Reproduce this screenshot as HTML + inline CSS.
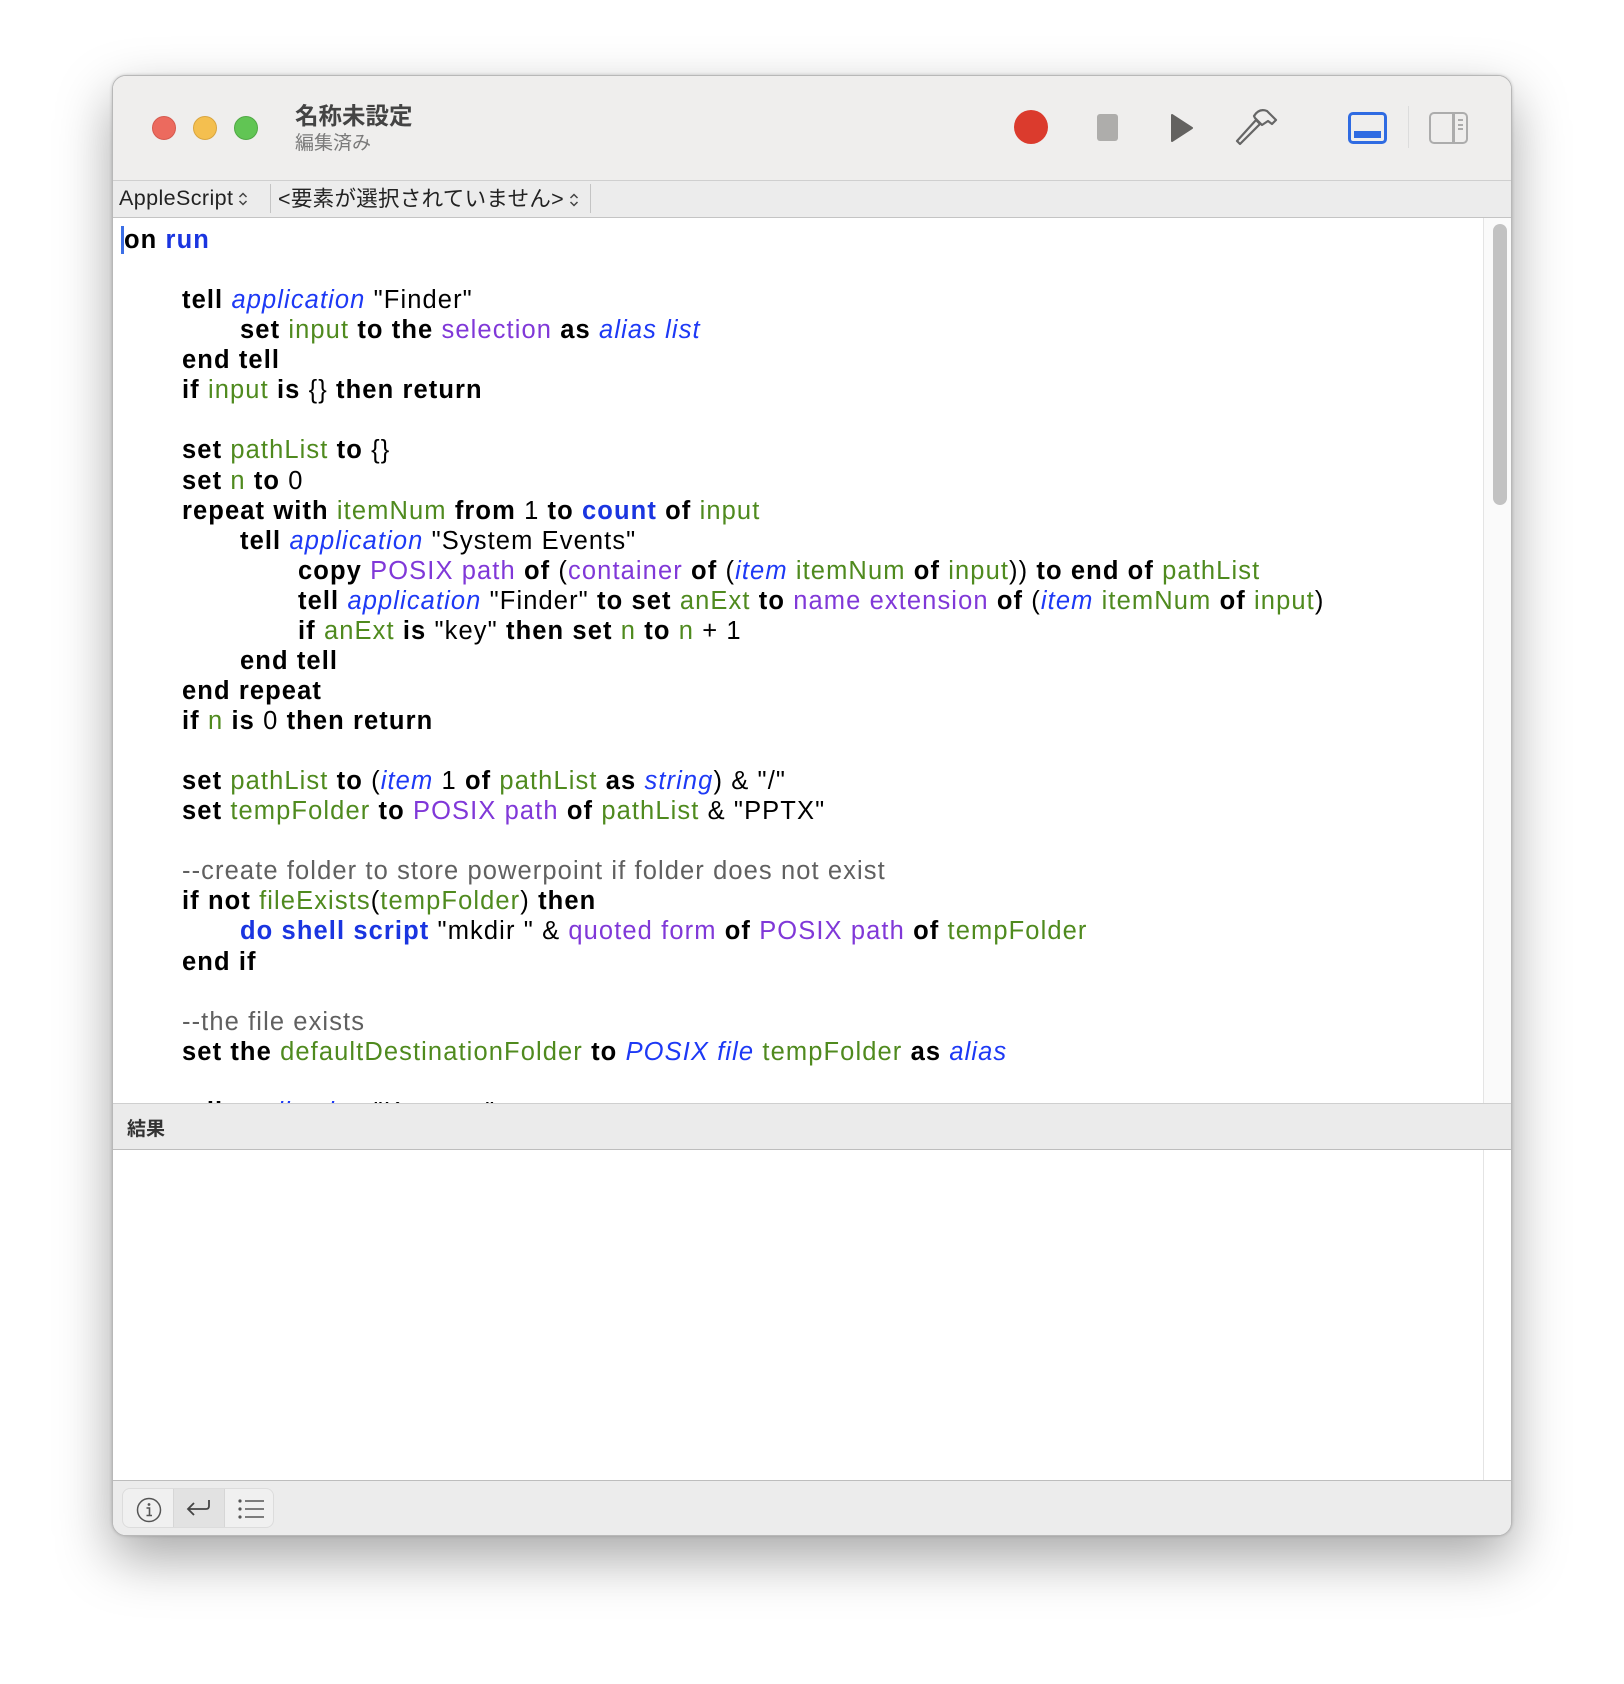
<!DOCTYPE html>
<html><head><meta charset="utf-8"><style>
*{margin:0;padding:0;box-sizing:border-box}
html,body{width:1624px;height:1684px;background:#fff;overflow:hidden;font-family:"Liberation Sans","Noto Sans CJK JP",sans-serif}
.win{position:absolute;left:112px;top:75px;width:1400px;height:1461px;border-radius:14px;overflow:hidden;background:#fff;border:1px solid #b8b8b8;box-shadow:0 22px 55px rgba(0,0,0,.35),0 0 3px rgba(0,0,0,.2)}
.tb{position:absolute;left:0;top:0;width:100%;height:105px;background:#efeeed;border-bottom:1px solid #cfcfcf}
.dot{position:absolute;top:40px;width:24px;height:24px;border-radius:50%}
.nav{position:absolute;left:0;top:105px;width:100%;height:37px;background:#ececec;border-bottom:1px solid #c4c4c4;font-size:21.5px;color:#222}
.nav span{position:absolute;top:5px;white-space:nowrap}
.sep{position:absolute;top:3px;width:1px;height:29px;background:#c4c4c4}
.ed{position:absolute;left:0;top:142px;width:1370px;height:885px;overflow:hidden;padding-top:7px}
.ln{height:30.07px;line-height:30px;font-size:25.5px;letter-spacing:1.1px;white-space:pre;color:#000}
.i1{padding-left:69px}.i2{padding-left:127px}.i3{padding-left:185px}.i0{padding-left:11px}
b{font-weight:bold}
.g{color:#4f8a1e}.p{color:#8038d8}.bl{color:#1d39f5;font-style:italic}.bb{color:#1a35e0;font-weight:bold}.c{color:#606060}
.sb{position:absolute;left:1370px;top:142px;width:30px;height:885px;background:#fafafa;border-left:1px solid #e4e4e4}
.th{position:absolute;left:9px;top:6px;width:14px;height:281px;border-radius:7px;background:#c2c2c2}
.rh{position:absolute;left:0;top:1027px;width:100%;height:47px;background:#ebebeb;border-top:1px solid #cfcfcf;border-bottom:1px solid #bdbdbd;font-size:19px;font-weight:bold;color:#333;padding:10px 0 0 14px}
.rb{position:absolute;left:0;top:1074px;width:100%;height:330px;background:#fff}
.rbs{position:absolute;left:1370px;top:0;width:1px;height:330px;background:#e4e4e4}
.bot{position:absolute;left:0;top:1404px;width:100%;height:57px;background:#ececec;border-top:1px solid #bdbdbd}
.btns{position:absolute;left:9px;top:7px;width:152px;height:40px;border:1px solid #dcdcdc;border-radius:8px;background:#f0f0f0;overflow:hidden}
.chev{display:inline-block;vertical-align:middle;margin-left:5px}
</style></head><body>
<div class="win">
<div class="tb">
<div class="dot" style="left:39px;background:#ec6a5e;border:1px solid #d55a4f"></div>
<div class="dot" style="left:80px;background:#f4bf4f;border:1px solid #d9a53f"></div>
<div class="dot" style="left:121px;background:#61c554;border:1px solid #50a845"></div>
<div style="position:absolute;left:182px;top:21px;font-size:23.5px;font-weight:bold;color:#444">名称未設定</div>
<div style="position:absolute;left:182px;top:52px;font-size:19px;color:#7a7a7a">編集済み</div>
<div style="position:absolute;left:901px;top:34px;width:34px;height:34px;border-radius:50%;background:#db3b2d"></div>
<div style="position:absolute;left:984px;top:38px;width:21px;height:27px;border-radius:3px;background:#aeadab"></div>
<svg style="position:absolute;left:1057px;top:36px" width="24" height="32"><path d="M2 3 L22 16 L2 29 Z" fill="#636260" stroke="#636260" stroke-width="2" stroke-linejoin="round"/></svg>
<svg style="position:absolute;left:1120px;top:27px" width="46" height="46" viewBox="0 0 46 46" fill="none" stroke="#666" stroke-width="2.2" stroke-linejoin="round"><path d="M4 38 L23 17 L27 21 L7 41 Z"/><path d="M21 13 Q26 5 34 8 L40 14 L43 17 L39 21 L35 18 L29 22 L22 15 Z"/></svg>
<div style="position:absolute;left:1235px;top:36px;width:39px;height:32px;border:3px solid #2f6be2;border-radius:5px"><div style="position:absolute;left:3px;right:3px;bottom:3px;height:7px;background:#2f6be2"></div></div>
<div style="position:absolute;left:1295px;top:30px;width:1px;height:42px;background:#dcdcdc"></div>
<div style="position:absolute;left:1316px;top:36px;width:39px;height:32px;border:2.5px solid #acacac;border-radius:5px"><div style="position:absolute;left:21px;top:0;bottom:0;width:2.5px;background:#acacac"></div><div style="position:absolute;left:27px;top:5px;width:5px;height:11px;border-top:2px solid #acacac;border-bottom:2px solid #acacac"></div><div style="position:absolute;left:27px;top:9.5px;width:5px;height:2px;background:#acacac"></div></div>
</div>
<div class="nav"><span style="left:6px;letter-spacing:.4px">AppleScript<svg class="chev" width="10" height="16"><path d="M1.5 6 L5 2.5 L8.5 6 M1.5 10 L5 13.5 L8.5 10" fill="none" stroke="#444" stroke-width="1.5"/></svg></span><div class="sep" style="left:157px"></div><span style="left:165px;top:1px;letter-spacing:.3px">&lt;要素が選択されていません&gt;<svg class="chev" width="10" height="16"><path d="M1.5 6 L5 2.5 L8.5 6 M1.5 10 L5 13.5 L8.5 10" fill="none" stroke="#444" stroke-width="1.5"/></svg></span><div class="sep" style="left:477px"></div></div>
<div class="ed">
<div class="ln i0"><span style="border-left:3px solid #3c6fe6;margin-left:-3px"></span><b>on</b> <span class="bb">run</span></div>
<div class="ln"> </div>
<div class="ln i1"><b>tell</b> <span class="bl">application</span> "Finder"</div>
<div class="ln i2"><b>set</b> <span class="g">input</span> <b>to the</b> <span class="p">selection</span> <b>as</b> <span class="bl">alias list</span></div>
<div class="ln i1"><b>end tell</b></div>
<div class="ln i1"><b>if</b> <span class="g">input</span> <b>is</b> {} <b>then return</b></div>
<div class="ln"> </div>
<div class="ln i1"><b>set</b> <span class="g">pathList</span> <b>to</b> {}</div>
<div class="ln i1"><b>set</b> <span class="g">n</span> <b>to</b> 0</div>
<div class="ln i1"><b>repeat with</b> <span class="g">itemNum</span> <b>from</b> 1 <b>to</b> <span class="bb">count</span> <b>of</b> <span class="g">input</span></div>
<div class="ln i2"><b>tell</b> <span class="bl">application</span> "System Events"</div>
<div class="ln i3"><b>copy</b> <span class="p">POSIX path</span> <b>of</b> (<span class="p">container</span> <b>of</b> (<span class="bl">item</span> <span class="g">itemNum</span> <b>of</b> <span class="g">input</span>)) <b>to end of</b> <span class="g">pathList</span></div>
<div class="ln i3"><b>tell</b> <span class="bl">application</span> "Finder" <b>to set</b> <span class="g">anExt</span> <b>to</b> <span class="p">name extension</span> <b>of</b> (<span class="bl">item</span> <span class="g">itemNum</span> <b>of</b> <span class="g">input</span>)</div>
<div class="ln i3"><b>if</b> <span class="g">anExt</span> <b>is</b> "key" <b>then set</b> <span class="g">n</span> <b>to</b> <span class="g">n</span> + 1</div>
<div class="ln i2"><b>end tell</b></div>
<div class="ln i1"><b>end repeat</b></div>
<div class="ln i1"><b>if</b> <span class="g">n</span> <b>is</b> 0 <b>then return</b></div>
<div class="ln"> </div>
<div class="ln i1"><b>set</b> <span class="g">pathList</span> <b>to</b> (<span class="bl">item</span> 1 <b>of</b> <span class="g">pathList</span> <b>as</b> <span class="bl">string</span>) &amp; "/"</div>
<div class="ln i1"><b>set</b> <span class="g">tempFolder</span> <b>to</b> <span class="p">POSIX path</span> <b>of</b> <span class="g">pathList</span> &amp; "PPTX"</div>
<div class="ln"> </div>
<div class="ln i1 c">--create folder to store powerpoint if folder does not exist</div>
<div class="ln i1"><b>if not</b> <span class="g">fileExists</span>(<span class="g">tempFolder</span>) <b>then</b></div>
<div class="ln i2"><span class="bb">do shell script</span> "mkdir " &amp; <span class="p">quoted form</span> <b>of</b> <span class="p">POSIX path</span> <b>of</b> <span class="g">tempFolder</span></div>
<div class="ln i1"><b>end if</b></div>
<div class="ln"> </div>
<div class="ln i1 c">--the file exists</div>
<div class="ln i1"><b>set the</b> <span class="g">defaultDestinationFolder</span> <b>to</b> <span class="bl">POSIX file</span> <span class="g">tempFolder</span> <b>as</b> <span class="bl">alias</span></div>
<div class="ln"> </div>
<div class="ln i1"><b>tell</b> <span class="bl">application</span> "Keynote"</div>
</div>
<div class="sb"><div class="th"></div></div>
<div class="rh">結果</div>
<div class="rb"><div class="rbs"></div></div>
<div class="bot"><div class="btns">
<svg style="position:absolute;left:13px;top:8px" width="26" height="26"><circle cx="13" cy="13" r="11.5" fill="none" stroke="#555" stroke-width="1.5"/><circle cx="13" cy="7.5" r="1.4" fill="#555"/><path d="M10.5 11 H13.5 V18.5 M10.5 18.5 H16" fill="none" stroke="#555" stroke-width="1.6"/></svg>
<div style="position:absolute;left:50px;top:0;width:52px;height:40px;background:#e2e2e2;border-left:1px solid #d6d6d6;border-right:1px solid #d6d6d6"></div>
<svg style="position:absolute;left:62px;top:9px" width="28" height="22" fill="none" stroke="#444" stroke-width="1.8"><path d="M24 2 V8 Q24 11 21 11 H3 M9 5 L3 11 L9 17"/></svg>
<svg style="position:absolute;left:114px;top:9px" width="28" height="22"><g fill="#555"><circle cx="3" cy="3" r="1.6"/><circle cx="3" cy="11" r="1.6"/><circle cx="3" cy="19" r="1.6"/></g><path d="M8 3H27M8 11H27M8 19H27" stroke="#555" stroke-width="1.5"/></svg>
</div></div>
</div>
</body></html>
